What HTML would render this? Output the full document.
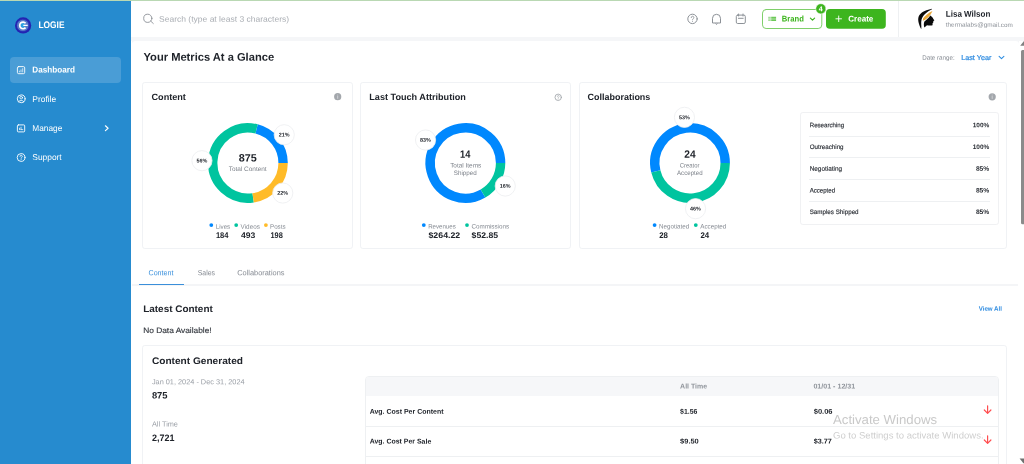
<!DOCTYPE html>
<html><head><meta charset="utf-8"><title>Dashboard</title>
<style>
*{box-sizing:border-box;margin:0;padding:0}
html,body{width:1024px;height:464px;overflow:hidden;background:#fff}
body{position:relative;font-family:"Liberation Sans",sans-serif;color:#20242b}
.a{position:absolute}
.t{position:absolute;left:0;top:0;line-height:1;white-space:nowrap;transform-origin:0 0}
.card{position:absolute;border:1px solid #f0f2f5;border-radius:2.8px;background:#fff}
.hl{position:absolute;height:1px;background:#eef0f2}

</style></head>
<body>
<div class="a" style="left:0;top:0;width:1024px;height:1px;background:#b9d8b3"></div>
<!-- sidebar -->
<div class="a" style="left:0;top:1px;width:130.5px;height:463px;background:#268bcf"></div>
<div class="a" style="left:10.3px;top:57.1px;width:110.5px;height:25.8px;border-radius:4px;background:#4a9dd6"></div>
<!-- header -->
<div class="a" style="left:130.5px;top:1px;width:893.5px;height:36px;background:#fff"></div>
<div class="a" style="left:130.5px;top:37.1px;width:893.5px;height:3.8px;background:#f5f6f8"></div>
<div class="a" style="left:131.8px;top:40.8px;width:4px;height:4px;background:#f5f6f8"></div>
<div class="a" style="left:1014.8px;top:40.8px;width:4px;height:4px;background:#f5f6f8"></div>
<div class="a" style="left:131.8px;top:40.8px;width:887px;height:10px;background:#fff;border-radius:3.5px 3.5px 0 0"></div>
<div class="a" style="left:897.6px;top:1px;width:1px;height:36.3px;background:#eef0f2"></div>
<!-- cards -->
<div class="card" style="left:142px;top:82px;width:210.5px;height:166.5px"></div>
<div class="card" style="left:360.4px;top:82px;width:210.2px;height:166.5px"></div>
<div class="card" style="left:579px;top:82px;width:427.6px;height:166.5px"></div>
<div class="card" style="left:800.4px;top:112.3px;width:198.4px;height:113px;border-color:#f0f1f3"></div>
<div class="hl" style="left:809px;top:135.5px;width:181px"></div>
<div class="hl" style="left:809px;top:157.2px;width:181px"></div>
<div class="hl" style="left:809px;top:178.9px;width:181px"></div>
<div class="hl" style="left:809px;top:200.6px;width:181px"></div>
<!-- tabs -->
<div class="a" style="left:132.2px;top:283.9px;width:886.2px;height:1.9px;background:#f4f5f7"></div>
<div class="a" style="left:138.9px;top:283.7px;width:44.8px;height:1.4px;background:#3a8fda"></div>
<!-- content generated card -->
<div class="card" style="left:142px;top:345px;width:864.6px;height:130px"></div>
<div class="a" style="left:365px;top:375.9px;width:633.5px;height:100px;border:1px solid #eef0f2;border-radius:4px;overflow:hidden">
  <div class="a" style="left:0;top:0;width:100%;height:19.5px;background:#f6f7f9"></div>
  <div class="hl" style="left:0;top:49px;width:100%"></div>
  <div class="hl" style="left:0;top:79px;width:100%"></div>
</div>

<svg class="a" style="left:0;top:0" width="1024" height="464" viewBox="0 0 1024 464"><path d="M283.10 163.00A35.2 35.2 0 0 0 256.59 128.89" fill="none" stroke="#0088fe" stroke-width="9.4"/><path d="M256.59 128.89A35.2 35.2 0 1 0 253.13 197.81" fill="none" stroke="#00c49f" stroke-width="9.4"/><path d="M253.13 197.81A35.2 35.2 0 0 0 283.10 163.00" fill="none" stroke="#ffbb28" stroke-width="9.4"/><circle cx="284.22" cy="134.77" r="10.1" fill="#fff" stroke="#eceef0" stroke-width="0.8"/><circle cx="201.96" cy="160.69" r="10.1" fill="#fff" stroke="#eceef0" stroke-width="0.8"/><circle cx="282.76" cy="193.02" r="10.1" fill="#fff" stroke="#eceef0" stroke-width="0.8"/><path d="M500.60 163.00A35.2 35.2 0 1 0 483.00 193.49" fill="none" stroke="#0088fe" stroke-width="9.4"/><path d="M483.00 193.49A35.2 35.2 0 0 0 500.60 163.00" fill="none" stroke="#00c49f" stroke-width="9.4"/><circle cx="425.56" cy="140.00" r="10.1" fill="#fff" stroke="#eceef0" stroke-width="0.8"/><circle cx="505.24" cy="186.00" r="10.1" fill="#fff" stroke="#eceef0" stroke-width="0.8"/><path d="M725.20 163.00A35.2 35.2 0 1 0 655.82 171.42" fill="none" stroke="#0088fe" stroke-width="9.4"/><path d="M655.82 171.42A35.2 35.2 0 0 0 725.20 163.00" fill="none" stroke="#00c49f" stroke-width="9.4"/><circle cx="684.46" cy="117.34" r="10.1" fill="#fff" stroke="#eceef0" stroke-width="0.8"/><circle cx="695.54" cy="208.66" r="10.1" fill="#fff" stroke="#eceef0" stroke-width="0.8"/><circle cx="211.3" cy="225.1" r="1.9" fill="#0088fe"/><circle cx="236.2" cy="225.1" r="1.9" fill="#00c49f"/><circle cx="265.9" cy="225.1" r="1.9" fill="#ffbb28"/><circle cx="423.8" cy="225.1" r="1.9" fill="#0088fe"/><circle cx="467" cy="225.1" r="1.9" fill="#00c49f"/><circle cx="654.6" cy="225.1" r="1.9" fill="#0088fe"/><circle cx="695.8" cy="225.1" r="1.9" fill="#00c49f"/></svg><svg class="a" style="left:0;top:0" width="1024" height="464" viewBox="0 0 1024 464" fill="none" stroke-linecap="round" stroke-linejoin="round"><circle cx="23.1" cy="25.4" r="8.1" fill="#2323b2"/><circle cx="23.1" cy="25.4" r="6.6" fill="#2a34b8"/><circle cx="22.8" cy="25.4" r="5.7" fill="#6f9ad0" fill-opacity="0.7"/><circle cx="22.8" cy="25.4" r="2.4" fill="#2aa2e2"/><path d="M25.6 23.2A3.35 3.35 0 1 0 25.6 27.6" stroke="#fff" stroke-width="1.7" stroke-linecap="butt"/><path d="M23.3 25.4H27.7" stroke="#fff" stroke-width="1.25" stroke-linecap="butt"/><g stroke="#fff" stroke-width="0.9"><rect x="17.4" y="66.6" width="7.3" height="7.1" rx="1.3"/><path d="M19.4 71.9v-0.8M21 71.9v-2M22.7 71.9v-3.3" stroke-width="0.8" stroke-opacity="0.85"/></g><g stroke="#fff" stroke-width="0.9"><circle cx="21.2" cy="98.8" r="3.9"/><circle cx="21.2" cy="97.7" r="1.3" stroke-width="0.8"/><path d="M18.6 101.6a3.2 3.2 0 0 1 5.2 0" stroke-width="0.8"/></g><g stroke="#fff" stroke-width="0.9"><rect x="17.4" y="124.9" width="7.3" height="7" rx="1"/><path d="M19.5 129.6v-1.4M21 129.6v-2.4M21 129.6h1.8" stroke-width="0.8" stroke-opacity="0.9"/></g><g stroke="#fff" stroke-width="0.9"><circle cx="21.1" cy="157.5" r="3.9"/><path d="M20 156.4a1.15 1.15 0 1 1 1.7 1c-.4.25-.55.5-.55.9M21.15 159.6v.05" stroke-width="0.8"/></g><path d="M105.4 125.8l2.7 2.4-2.7 2.4" stroke="#fff" stroke-width="1.15"/><g stroke="#8c9197" stroke-width="0.9"><circle cx="147.8" cy="18.3" r="4.1"/><path d="M150.8 21.2l2.5 2.3"/></g><g stroke="#8c9197" stroke-width="1"><circle cx="692.5" cy="18.9" r="4.7"/><path d="M691.2 17.6a1.35 1.35 0 1 1 2 1.15c-.5.3-.7.6-.7 1.1M692.5 21.4v.05" stroke-width="0.85"/></g><g stroke="#8c9197" stroke-width="1"><path d="M712.5 22.6v-4.3a4 4 0 0 1 8 0v4.3z"/><path d="M715.8 23.6l.7 1 .7-1" stroke-width="0.8"/></g><g stroke="#8c9197" stroke-width="1"><rect x="736.3" y="15.1" width="9" height="8.4" rx="1.4"/><path d="M738.6 14v2M743 14v2M738.4 18.3h4.8"/></g><rect x="762.5" y="9.5" width="59.3" height="19" rx="3.6" stroke="#7fcf6a" stroke-width="1" fill="#fff"/><path d="M771.2 17.25h4.9M771.2 18.8h4.9M771.2 20.35h4.9" stroke="#6cc957" stroke-width="1.25" stroke-linecap="butt"/><path d="M768.2 17.25h2.6M768.2 18.8h2.6M768.2 20.35h2.6" stroke="#a6dd9a" stroke-width="1.25" stroke-linecap="butt"/><path d="M810.4 18.1l2.1 2 2.1-2" stroke="#3db51e" stroke-width="1.2"/><circle cx="820.9" cy="8.8" r="5.1" fill="#3db51e" stroke="#fff" stroke-width="0.5"/><rect x="826" y="9.1" width="59.8" height="19.7" rx="3.8" fill="#3db51e"/><path d="M835.9 18.8h5.6M838.7 16v5.6" stroke="#fff" stroke-width="0.9"/><path d="M999.1 56.3l2.4 2.3 2.4-2.3" stroke="#2a8be0" stroke-width="1.05"/><circle cx="337.7" cy="96.7" r="3.6" fill="#a3a7ac"/><path d="M337.7 96.4v2" stroke="#d4d6d9" stroke-width="0.9"/><circle cx="337.7" cy="94.9" r="0.5" fill="#d4d6d9"/><circle cx="992.2" cy="96.8" r="3.6" fill="#a3a7ac"/><path d="M992.2 96.5v2" stroke="#d4d6d9" stroke-width="0.9"/><circle cx="992.2" cy="95" r="0.5" fill="#d4d6d9"/><g stroke="#a0a5aa" stroke-width="0.85"><circle cx="558.2" cy="97.3" r="3.2"/><path d="M557.4 96.4a.9.9 0 1 1 1.3.75c-.3.2-.45.4-.45.7M558.25 98.9v.05" stroke-width="0.65"/></g><path d="M987.6 405.8v7.4M984.3 410.0l3.3 3.3 3.3-3.3" stroke="#ff4d4f" stroke-width="1.2"/><path d="M987.6 435.8v7.4M984.3 440.0l3.3 3.3 3.3-3.3" stroke="#ff4d4f" stroke-width="1.2"/><g transform="translate(905 2) scale(0.0733)" stroke="none"><path fill="#0a0a0a" d="M368 92C300 108 230 130 195 180C168 222 180 292 222 372C228 330 214 282 226 240C242 182 300 132 368 100Z"/><path fill="#e9a83a" d="M374 123C320 150 270 185 246 226L243 257C292 240 346 190 374 123Z"/><path fill="#0a0a0a" d="M345 183C362 195 386 214 386 232L401 250L386 262L386 280L376 290L376 316C360 326 320 322 300 318L265 347C254 320 254 290 265 265C290 245 326 215 345 183Z"/></g><rect x="1021" y="49.9" width="6" height="174.3" rx="1.5" fill="#8b8b8b"/><path d="M1020.2 45.8l3.8-4.9 3.8 4.9z" fill="#808080"/><path d="M1019.6 458.6l4 5 4-5z" fill="#707070"/></svg>
<div id="txt" style="position:absolute;left:0;top:0;width:1024px;height:464px;will-change:transform">
<span class="t" style="font-size:9.6px;font-weight:700;color:#ffffff;transform:translate(38.50px,19.90px) scaleX(0.8700) rotate(.03deg);">LOGIE</span>
<span class="t" style="font-size:8.53px;font-weight:700;color:#ffffff;transform:translate(32.30px,65.60px) scaleX(0.9575) rotate(.03deg);">Dashboard</span>
<span class="t" style="font-size:8.53px;color:#ffffff;transform:translate(32.30px,94.90px) scaleX(0.9875) rotate(.03deg);">Profile</span>
<span class="t" style="font-size:8.53px;color:#ffffff;transform:translate(32.30px,123.90px) scaleX(0.9760) rotate(.03deg);">Manage</span>
<span class="t" style="font-size:8.53px;color:#ffffff;transform:translate(32.30px,152.90px) scaleX(0.9848) rotate(.03deg);">Support</span>
<span class="t" style="font-size:8px;color:#a9adb3;transform:translate(159.00px,15.80px) scaleX(1.0643) rotate(.03deg);">Search (type at least 3 characters)</span>
<span class="t" style="font-size:8.3px;font-weight:700;color:#3db51e;transform:translate(781.70px,14.60px) scaleX(0.9241) rotate(.03deg);">Brand</span>
<span class="t" style="font-size:8.3px;font-weight:700;color:#ffffff;transform:translate(848.20px,14.60px) scaleX(0.9728) rotate(.03deg);">Create</span>
<span class="t" style="font-size:7px;font-weight:700;color:#ffffff;transform:translate(818.85px,5.30px) scaleX(1.0215) rotate(.03deg);">4</span>
<span class="t" style="font-size:8.53px;font-weight:700;color:#20242b;transform:translate(945.80px,9.80px) scaleX(0.9437) rotate(.03deg);">Lisa Wilson</span>
<span class="t" style="font-size:6.2px;color:#8d9299;transform:translate(945.80px,21.85px) scaleX(1.0286) rotate(.03deg);">thermalabs@gmail.com</span>
<span class="t" style="font-size:11.2px;font-weight:700;color:#20242b;transform:translate(143.50px,51.80px) scaleX(0.9957) rotate(.03deg);">Your Metrics At a Glance</span>
<span class="t" style="font-size:6.4px;color:#858a92;transform:translate(922.20px,54.80px) scaleX(0.9723) rotate(.03deg);">Date range:</span>
<span class="t" style="font-size:7.2px;color:#2b8ae0;transform:translate(961.20px,53.95px) scaleX(1.0069) rotate(.03deg);-webkit-text-stroke:0.2px #2b8ae0;">Last Year</span>
<span class="t" style="font-size:9.07px;font-weight:700;color:#20242b;transform:translate(151.50px,93.00px) scaleX(1.0054) rotate(.03deg);">Content</span>
<span class="t" style="font-size:9.07px;font-weight:700;color:#20242b;transform:translate(369.30px,93.00px) scaleX(1.0039) rotate(.03deg);">Last Touch Attribution</span>
<span class="t" style="font-size:9.07px;font-weight:700;color:#20242b;transform:translate(587.60px,93.00px) scaleX(0.9888) rotate(.03deg);">Collaborations</span>
<span class="t" style="font-size:10.67px;font-weight:700;color:#20242b;transform:translate(238.65px,152.50px) scaleX(1.0137) rotate(.03deg);">875</span>
<span class="t" style="font-size:6.4px;color:#7d828a;transform:translate(228.70px,165.90px) scaleX(1.0080) rotate(.03deg);">Total Content</span>
<span class="t" style="font-size:6.4px;color:#858a92;transform:translate(215.70px,223.70px) scaleX(0.9710) rotate(.03deg);">Lives</span>
<span class="t" style="font-size:6.4px;color:#858a92;transform:translate(240.60px,223.70px) scaleX(0.9926) rotate(.03deg);">Videos</span>
<span class="t" style="font-size:6.4px;color:#858a92;transform:translate(270.00px,223.70px) scaleX(0.9754) rotate(.03deg);">Posts</span>
<span class="t" style="font-size:8.2px;font-weight:700;color:#20242b;transform:translate(215.90px,231.90px) scaleX(0.9208) rotate(.03deg);">184</span>
<span class="t" style="font-size:8.2px;font-weight:700;color:#20242b;transform:translate(241.00px,231.90px) scaleX(1.0483) rotate(.03deg);">493</span>
<span class="t" style="font-size:8.2px;font-weight:700;color:#20242b;transform:translate(270.40px,231.90px) scaleX(0.9066) rotate(.03deg);">198</span>
<span class="t" style="font-size:10.67px;font-weight:700;color:#20242b;transform:translate(460.10px,148.80px) scaleX(0.8715) rotate(.03deg);">14</span>
<span class="t" style="font-size:6.4px;color:#7d828a;transform:translate(450.15px,162.50px) scaleX(1.0062) rotate(.03deg);">Total Items</span>
<span class="t" style="font-size:6.4px;color:#7d828a;transform:translate(453.80px,169.90px) scaleX(0.9785) rotate(.03deg);">Shipped</span>
<span class="t" style="font-size:6.4px;color:#858a92;transform:translate(428.20px,223.50px) scaleX(0.9550) rotate(.03deg);">Revenues</span>
<span class="t" style="font-size:6.4px;color:#858a92;transform:translate(471.40px,223.50px) scaleX(0.9826) rotate(.03deg);">Commissions</span>
<span class="t" style="font-size:8.2px;font-weight:700;color:#20242b;transform:translate(428.50px,231.90px) scaleX(1.0713) rotate(.03deg);">$264.22</span>
<span class="t" style="font-size:8.2px;font-weight:700;color:#20242b;transform:translate(471.60px,231.90px) scaleX(1.0552) rotate(.03deg);">$52.85</span>
<span class="t" style="font-size:10.67px;font-weight:700;color:#20242b;transform:translate(684.30px,148.80px) scaleX(0.9553) rotate(.03deg);">24</span>
<span class="t" style="font-size:6.4px;color:#7d828a;transform:translate(679.75px,162.50px) scaleX(0.9241) rotate(.03deg);">Creator</span>
<span class="t" style="font-size:6.4px;color:#7d828a;transform:translate(677.00px,169.90px) scaleX(0.9593) rotate(.03deg);">Accepted</span>
<span class="t" style="font-size:6.4px;color:#858a92;transform:translate(659.00px,223.50px) scaleX(0.9755) rotate(.03deg);">Negotiated</span>
<span class="t" style="font-size:6.4px;color:#858a92;transform:translate(700.20px,223.50px) scaleX(0.9815) rotate(.03deg);">Accepted</span>
<span class="t" style="font-size:8.2px;font-weight:700;color:#20242b;transform:translate(659.20px,231.90px) scaleX(0.9627) rotate(.03deg);">28</span>
<span class="t" style="font-size:8.2px;font-weight:700;color:#20242b;transform:translate(700.40px,231.90px) scaleX(0.9627) rotate(.03deg);">24</span>
<span class="t" style="font-size:5.4px;font-weight:700;color:#20242b;transform:translate(278.72px,132.62px) scaleX(0.9996) rotate(.03deg);">21%</span>
<span class="t" style="font-size:5.4px;font-weight:700;color:#20242b;transform:translate(196.46px,158.54px) scaleX(0.9996) rotate(.03deg);">56%</span>
<span class="t" style="font-size:5.4px;font-weight:700;color:#20242b;transform:translate(277.26px,190.87px) scaleX(0.9996) rotate(.03deg);">22%</span>
<span class="t" style="font-size:5.4px;font-weight:700;color:#20242b;transform:translate(420.06px,137.85px) scaleX(0.9996) rotate(.03deg);">83%</span>
<span class="t" style="font-size:5.4px;font-weight:700;color:#20242b;transform:translate(499.74px,183.85px) scaleX(0.9996) rotate(.03deg);">16%</span>
<span class="t" style="font-size:5.4px;font-weight:700;color:#20242b;transform:translate(678.96px,115.19px) scaleX(0.9996) rotate(.03deg);">53%</span>
<span class="t" style="font-size:5.4px;font-weight:700;color:#20242b;transform:translate(690.04px,206.51px) scaleX(0.9996) rotate(.03deg);">46%</span>
<span class="t" style="font-size:6.4px;color:#2a2e35;transform:translate(809.70px,122.30px) scaleX(0.9605) rotate(.03deg);-webkit-text-stroke:0.15px #2a2e35;">Researching</span>
<span class="t" style="font-size:6.4px;font-weight:700;color:#2a2e35;transform:translate(972.70px,122.30px) scaleX(1.0133) rotate(.03deg);">100%</span>
<span class="t" style="font-size:6.4px;color:#2a2e35;transform:translate(809.70px,144.00px) scaleX(0.9724) rotate(.03deg);-webkit-text-stroke:0.15px #2a2e35;">Outreaching</span>
<span class="t" style="font-size:6.4px;font-weight:700;color:#2a2e35;transform:translate(972.70px,144.00px) scaleX(1.0133) rotate(.03deg);">100%</span>
<span class="t" style="font-size:6.4px;color:#2a2e35;transform:translate(809.70px,165.70px) scaleX(1.0003) rotate(.03deg);-webkit-text-stroke:0.15px #2a2e35;">Negotiating</span>
<span class="t" style="font-size:6.4px;font-weight:700;color:#2a2e35;transform:translate(975.90px,165.70px) scaleX(1.0446) rotate(.03deg);">85%</span>
<span class="t" style="font-size:6.4px;color:#2a2e35;transform:translate(809.70px,187.40px) scaleX(0.9519) rotate(.03deg);-webkit-text-stroke:0.15px #2a2e35;">Accepted</span>
<span class="t" style="font-size:6.4px;font-weight:700;color:#2a2e35;transform:translate(975.90px,187.40px) scaleX(1.0446) rotate(.03deg);">85%</span>
<span class="t" style="font-size:6.4px;color:#2a2e35;transform:translate(809.70px,209.10px) scaleX(0.9755) rotate(.03deg);-webkit-text-stroke:0.15px #2a2e35;">Samples Shipped</span>
<span class="t" style="font-size:6.4px;font-weight:700;color:#2a2e35;transform:translate(975.90px,209.10px) scaleX(1.0446) rotate(.03deg);">85%</span>
<span class="t" style="font-size:7.47px;color:#3a90dc;transform:translate(148.50px,269.30px) scaleX(0.9521) rotate(.03deg);">Content</span>
<span class="t" style="font-size:7.47px;color:#858a92;transform:translate(197.70px,269.30px) scaleX(0.9233) rotate(.03deg);">Sales</span>
<span class="t" style="font-size:7.47px;color:#858a92;transform:translate(237.25px,269.30px) scaleX(0.9893) rotate(.03deg);">Collaborations</span>
<span class="t" style="font-size:9.6px;font-weight:700;color:#20242b;transform:translate(143.20px,303.90px) scaleX(1.0359) rotate(.03deg);">Latest Content</span>
<span class="t" style="font-size:6.4px;font-weight:700;color:#2b8ae0;transform:translate(978.70px,305.80px) scaleX(0.9599) rotate(.03deg);">View All</span>
<span class="t" style="font-size:7.8px;color:#33373e;transform:translate(143.20px,327.00px) scaleX(1.0697) rotate(.03deg);-webkit-text-stroke:0.15px #33373e;">No Data Available!</span>
<span class="t" style="font-size:9.6px;font-weight:700;color:#20242b;transform:translate(151.90px,356.00px) scaleX(1.0543) rotate(.03deg);">Content Generated</span>
<span class="t" style="font-size:7.3px;color:#9a9fa6;transform:translate(151.90px,378.30px) scaleX(1.0061) rotate(.03deg);">Jan 01, 2024 - Dec 31, 2024</span>
<span class="t" style="font-size:9.3px;font-weight:700;color:#20242b;transform:translate(151.90px,391.60px) scaleX(1.0101) rotate(.03deg);">875</span>
<span class="t" style="font-size:7.3px;color:#9a9fa6;transform:translate(151.90px,420.60px) scaleX(1.0040) rotate(.03deg);">All Time</span>
<span class="t" style="font-size:9.3px;font-weight:700;color:#20242b;transform:translate(151.90px,433.90px) scaleX(0.9699) rotate(.03deg);">2,721</span>
<span class="t" style="font-size:6.9px;font-weight:700;color:#8f949b;transform:translate(680.10px,383.60px) scaleX(1.0128) rotate(.03deg);">All Time</span>
<span class="t" style="font-size:6.9px;font-weight:700;color:#8f949b;transform:translate(813.40px,383.60px) scaleX(1.0296) rotate(.03deg);">01/01 - 12/31</span>
<span class="t" style="font-size:6.93px;font-weight:700;color:#20242b;transform:translate(369.70px,408.70px) scaleX(1.0081) rotate(.03deg);">Avg. Cost Per Content</span>
<span class="t" style="font-size:6.93px;font-weight:700;color:#20242b;transform:translate(369.70px,438.60px) scaleX(1.0041) rotate(.03deg);">Avg. Cost Per Sale</span>
<span class="t" style="font-size:6.93px;font-weight:700;color:#20242b;transform:translate(680.10px,408.70px) scaleX(0.9955) rotate(.03deg);">$1.56</span>
<span class="t" style="font-size:6.93px;font-weight:700;color:#20242b;transform:translate(680.10px,438.60px) scaleX(1.0756) rotate(.03deg);">$9.50</span>
<span class="t" style="font-size:6.93px;font-weight:700;color:#20242b;transform:translate(813.70px,408.70px) scaleX(1.0870) rotate(.03deg);">$0.06</span>
<span class="t" style="font-size:6.93px;font-weight:700;color:#20242b;transform:translate(813.70px,438.60px) scaleX(1.0413) rotate(.03deg);">$3.77</span>
<span class="t" style="font-size:13px;color:rgba(150,150,150,0.52);transform:translate(833.00px,412.90px) scaleX(1.0146) rotate(.03deg);">Activate Windows</span>
<span class="t" style="font-size:9.3px;color:rgba(150,150,150,0.48);transform:translate(833.00px,431.40px) scaleX(1.0261) rotate(.03deg);">Go to Settings to activate Windows.</span>
</div>
</body></html>
